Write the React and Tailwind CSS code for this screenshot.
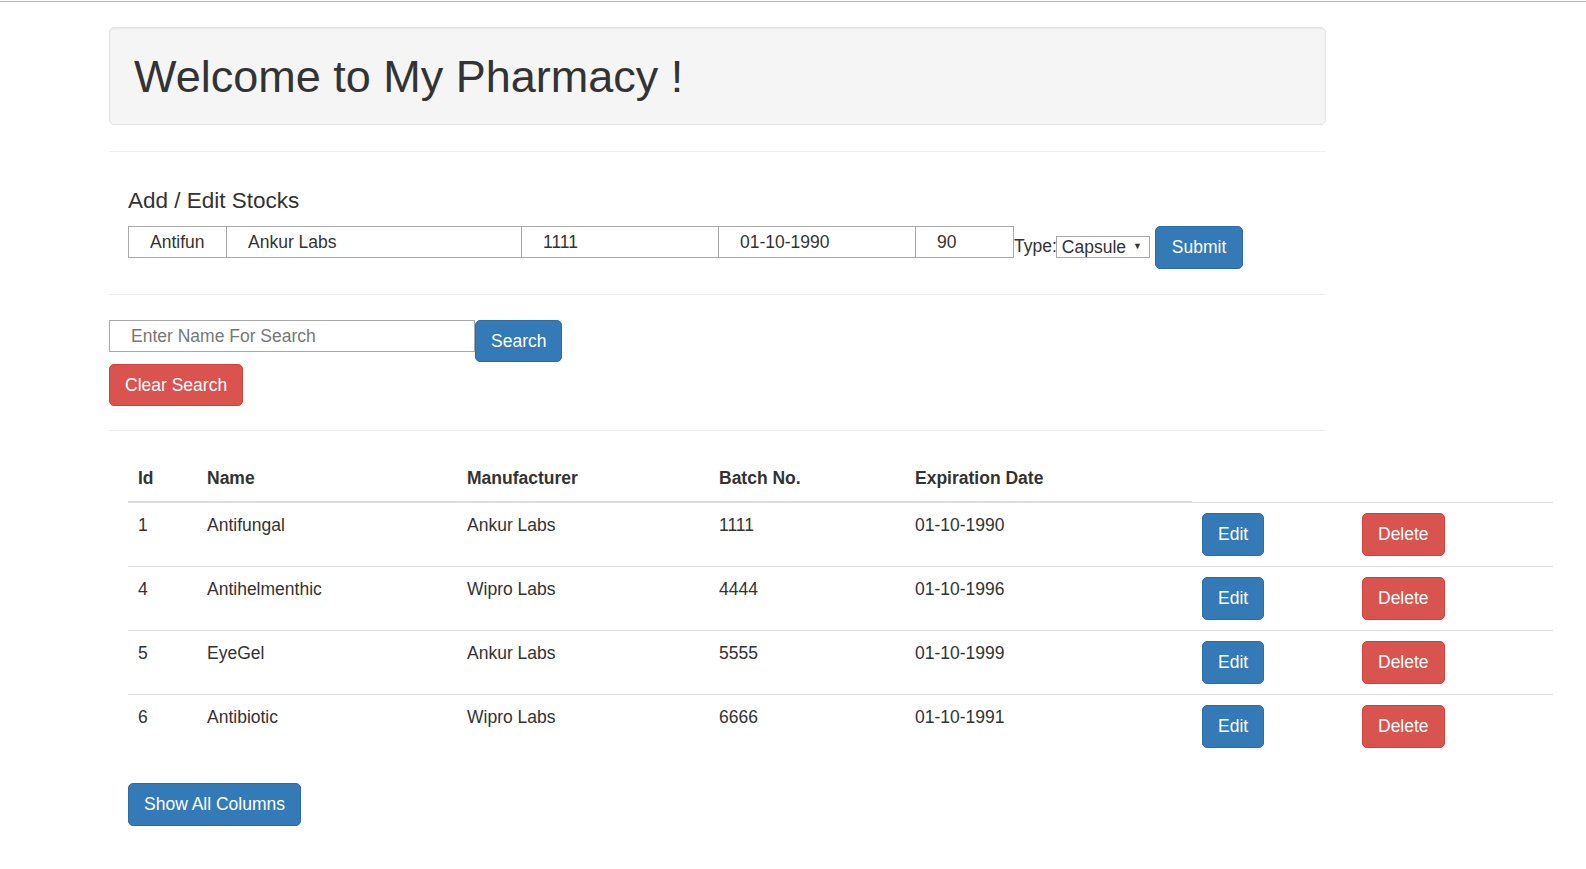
import React, { useState } from "react";

const stocks = [
  { id: 1, name: "Antifungal", manufacturer: "Ankur Labs", batch: "1111", expiry: "01-10-1990" },
  { id: 4, name: "Antihelmenthic", manufacturer: "Wipro Labs", batch: "4444", expiry: "01-10-1996" },
  { id: 5, name: "EyeGel", manufacturer: "Ankur Labs", batch: "5555", expiry: "01-10-1999" },
  { id: 6, name: "Antibiotic", manufacturer: "Wipro Labs", batch: "6666", expiry: "01-10-1991" },
];

const btnBase =
  "inline-block rounded-[5px] border px-[15px] text-[17.5px] leading-[25px] text-white";
const btnBlue = `${btnBase} border-[#2e6da4] bg-[#337ab7]`;
const btnRed = `${btnBase} border-[#d43f3a] bg-[#d9534f]`;
const field =
  "h-[32px] border border-[#a9a9a9] bg-white pl-[21px] pr-[21px] text-[17.5px] text-[#333] outline-none";

const App = () => {
  const [form, setForm] = useState({
    name: "Antifungal",
    manufacturer: "Ankur Labs",
    batch: "1111",
    expiry: "01-10-1990",
    qty: "90",
    type: "Capsule",
  });
  const [search, setSearch] = useState("");

  const set = (k) => (e) => setForm({ ...form, [k]: e.target.value });

  return (
    <main className="min-h-screen bg-white pt-px font-['Liberation_Sans',Arial,sans-serif] text-[17.5px] leading-[25px] text-[#333]">
      <div className="h-px bg-[#b4b4b4]" />

      <div className="ml-[109px] w-[1217px]">
        <div className="mt-[25px] rounded-[5px] border border-[#e3e3e3] bg-[#f5f5f5] px-[24px] pt-[24px] pb-[22px] shadow-[inset_0_1px_1px_rgba(0,0,0,0.05)]">
          <h1 className="text-[45px] leading-[50px]">Welcome to My Pharmacy !</h1>
        </div>

        <hr className="mt-[26px] border-0 border-t border-[#eee]" />

        <div className="pl-[19px]">
          <h4 className="mt-[36px] mb-[13px] text-[22.5px] leading-[25px]">Add / Edit Stocks</h4>
          <div className="flex items-start">
            <input className={`${field} w-[99px]`} value={form.name} onChange={set("name")} />
            <input className={`${field} -ml-px w-[296px]`} value={form.manufacturer} onChange={set("manufacturer")} />
            <input className={`${field} -ml-px w-[198px]`} value={form.batch} onChange={set("batch")} />
            <input className={`${field} -ml-px w-[198px]`} value={form.expiry} onChange={set("expiry")} />
            <input className={`${field} -ml-px w-[99px]`} value={form.qty} onChange={set("qty")} />
            <span className="mt-[8px]">Type:</span>
            <div className="relative mt-[9px] -ml-px">
              <select
                className="h-[22px] w-[94px] appearance-none border border-[#a9a9a9] bg-white pl-[5px] text-[17.5px] leading-[20px] text-[#333] outline-none"
                value={form.type}
                onChange={set("type")}
              >
                <option>Capsule</option>
                <option>Tablet</option>
                <option>Syrup</option>
              </select>
              <span className="pointer-events-none absolute right-[8px] top-[5px] text-[9px] leading-[12px] text-[#333]">
                ▼
              </span>
            </div>
            <button className={`${btnBlue} ml-[5px] !px-[16px] py-[8px]`}>Submit</button>
          </div>
        </div>

        <hr className="mt-[25px] border-0 border-t border-[#eee]" />

        <div className="mt-[25px] flex items-start">
          <input
            className={`${field} w-[366px] placeholder:text-[#777]`}
            placeholder="Enter Name For Search"
            value={search}
            onChange={(e) => setSearch(e.target.value)}
          />
          <button className={`${btnBlue} py-[7.5px]`}>Search</button>
        </div>
        <div className="mt-[2px]">
          <button className={`${btnRed} py-[7.5px]`} onClick={() => setSearch("")}>
            Clear Search
          </button>
        </div>

        <hr className="mt-[24px] border-0 border-t border-[#eee]" />

        <div className="pl-[19px]">
          <table className="mt-[25px] w-[1425px] table-fixed border-collapse text-left">
            <colgroup>
              <col className="w-[69px]" />
              <col className="w-[260px]" />
              <col className="w-[252px]" />
              <col className="w-[196px]" />
              <col className="w-[287px]" />
              <col className="w-[160px]" />
              <col className="w-[201px]" />
            </colgroup>
            <thead>
              <tr>
                {["Id", "Name", "Manufacturer", "Batch No.", "Expiration Date"].map((h) => (
                  <th key={h} className="border-b-2 border-[#ddd] p-[10px] align-bottom font-bold">
                    {h}
                  </th>
                ))}
              </tr>
            </thead>
            <tbody>
              {stocks.map((s) => (
                <tr key={s.id}>
                  <td className="border-t border-[#ddd] p-[10px] align-top">{s.id}</td>
                  <td className="border-t border-[#ddd] p-[10px] align-top">{s.name}</td>
                  <td className="border-t border-[#ddd] p-[10px] align-top">{s.manufacturer}</td>
                  <td className="border-t border-[#ddd] p-[10px] align-top">{s.batch}</td>
                  <td className="border-t border-[#ddd] p-[10px] align-top">{s.expiry}</td>
                  <td className="border-t border-[#ddd] p-[10px] align-top">
                    <button className={`${btnBlue} py-[8px]`}>Edit</button>
                  </td>
                  <td className="border-t border-[#ddd] p-[10px] align-top">
                    <button className={`${btnRed} py-[8px]`}>Delete</button>
                  </td>
                </tr>
              ))}
            </tbody>
          </table>

          <button className={`${btnBlue} mt-[25px] py-[8px]`}>Show All Columns</button>
        </div>
      </div>
    </main>
  );
};

export default App;
